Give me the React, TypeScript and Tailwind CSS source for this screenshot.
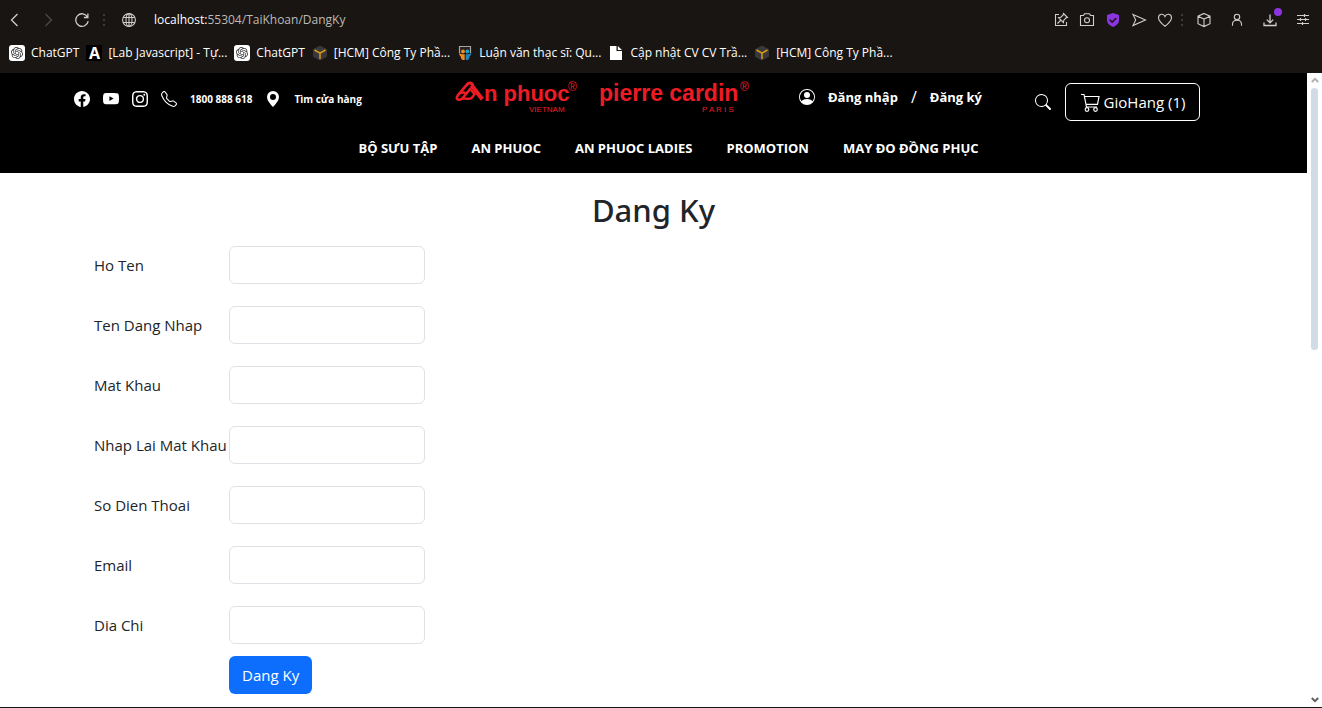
import type { ReactNode } from 'react';
import {
  BsFacebook,
  BsYoutube,
  BsInstagram,
  BsTelephone,
  BsGeoAltFill,
  BsPersonCircle,
  BsSearch,
} from 'react-icons/bs';
import { SiOpenai } from 'react-icons/si';

function Glyph({ children }: { children: ReactNode }) {
  return (
    <svg
      viewBox="0 0 16 16"
      className="block size-4"
      fill="none"
      stroke="currentColor"
      strokeWidth="1.1"
      aria-hidden="true"
    >
      {children}
    </svg>
  );
}

function ChromeButton({ label, dim, children }: { label: string; dim?: boolean; children: ReactNode }) {
  return (
    <button type="button" aria-label={label} className={dim ? 'block text-[#4d4946]' : 'block text-[#d0cdca]'}>
      <Glyph>{children}</Glyph>
    </button>
  );
}

function Dots() {
  return (
    <svg viewBox="0 0 2 12" className="h-3 w-0.5 shrink-0 fill-[#3d3936]" aria-hidden="true">
      <rect y="0" width="2" height="2" />
      <rect y="5" width="2" height="2" />
      <rect y="10" width="2" height="2" />
    </svg>
  );
}

function AddressBar() {
  return (
    <div className="flex h-10 items-center pr-[11px] pl-1.5">
      <div className="flex items-center gap-[18px]">
        <ChromeButton label="Back">
          <path d="M11.5 2 5.5 8l6 6" strokeWidth="1.3" />
        </ChromeButton>
        <ChromeButton label="Forward" dim>
          <path d="m5.500 2 6 6-6 6" strokeWidth="1.3" />
        </ChromeButton>
        <ChromeButton label="Reload">
          <path d="M13.6 5.200A6.300 6.300 0 1 0 14.200 9.200M13.900 1.500v4h-4" strokeWidth="1.3" />
        </ChromeButton>
      </div>
      <div className="ml-[13px] flex items-center gap-4">
        <Dots />
        <ChromeButton label="Site information">
          <circle cx="8" cy="8" r="6.400" />
          <ellipse cx="8" cy="8" rx="3" ry="6.400" />
          <path d="M2.300 5.500h11.400M2.300 10.500h11.400M8 1.600v12.800" />
        </ChromeButton>
      </div>
      <p className="ml-[17px] flex-1 text-[12px] text-[#bdbab7]">
        <span className="text-white">localhost:</span>55304/TaiKhoan/DangKy
      </p>
      <div className="flex items-center gap-2.5">
        <ChromeButton label="Pin page">
          <path d="M6 2.500H2.500v11h11V10" />
          <path d="m10.500 1.500 4 4-1.400.3-2.300 2.400-.4 2.300-4.900-4.900 2.300-.4 2.400-2.300zM8 8l-3.500 3.500" />
        </ChromeButton>
        <ChromeButton label="Snapshot">
          <path d="M1.500 3.500h3l1-1.800h5l1 1.800h3v10h-13z" />
          <circle cx="8" cy="8.200" r="2.500" />
        </ChromeButton>
        <ChromeButton label="Ad blocker">
          <path d="M8 1 14 3v5.500c0 3-2.500 5-6 6.500-3.500-1.500-6-3.500-6-6.500V3z" fill="#8b34e0" stroke="none" />
          <path d="m4.700 7.800 2.400 2.400 4.200-4.200" stroke="#191512" strokeWidth="1.600" />
        </ChromeButton>
        <ChromeButton label="Share">
          <path d="m2 2.400 12.500 5.600L2 13.600 4.700 8z" />
        </ChromeButton>
        <ChromeButton label="Favorites">
          <path d="M8 14.300C4.500 11.500 1.500 8.900 1.500 5.700c0-4 5-4.800 6.500-1.200 1.500-3.600 6.500-2.800 6.500 1.200 0 3.200-3 5.800-6.500 8.600z" />
        </ChromeButton>
      </div>
      <div className="ml-2 flex items-center gap-[13px]">
        <Dots />
        <div className="flex items-center gap-[17px]">
          <ChromeButton label="Extensions">
            <path d="m8 1.400 6 2.800v7.500l-6 2.900-6-2.900V4.200zM2 4.200l6 2.900 6-2.900M8 7.100v7.500" />
          </ChromeButton>
          <ChromeButton label="Profile">
            <circle cx="8" cy="4.900" r="2.700" />
            <path d="M3.500 13.800v-1.500c0-2.500 1.900-4 4.500-4s4.500 1.500 4.500 4v1.500" />
          </ChromeButton>
          <div className="relative">
            <ChromeButton label="Downloads">
              <path d="M8 2.500v8.200M4.800 7.600 8 10.800l3.200-3.200M2 10.500v3h12v-3" strokeWidth="1.300" />
            </ChromeButton>
            <span className="absolute -top-1 -right-1 size-2 rounded-full bg-[#8b34e0]" />
          </div>
          <ChromeButton label="Easy setup">
            <path d="M2 3.500h12M2 7.500h12M2 11.500h12M9.500 2v3M5.500 6v3M10.500 6v3M7.500 10v3" strokeWidth="1.200" />
          </ChromeButton>
        </div>
      </div>
    </div>
  );
}

function GptIcon() {
  return (
    <span className="flex size-4 items-center justify-center rounded-[3px] bg-white text-[#333]">
      <SiOpenai className="size-3" />
    </span>
  );
}

function LetterIcon() {
  return (
    <span className="flex size-4 items-center justify-center bg-black text-base leading-4 font-bold text-white">
      A
    </span>
  );
}

function CubeIcon() {
  return (
    <svg viewBox="0 0 16 16" className="size-4" aria-hidden="true">
      <path d="m8 .5 7 3.700v7.600l-7 3.700-7-3.700V4.200z" fill="#38383c" />
      <path d="m2.500 5 5.500 3.200L13.500 5M8 8.200v5.800" fill="none" stroke="#d99a14" strokeWidth="1.500" />
    </svg>
  );
}

function SlideIcon() {
  return (
    <svg viewBox="0 0 16 16" className="size-4" aria-hidden="true">
      <path d="M2.500 8V1.500h11V8" fill="#26221f" stroke="#a5a5a5" strokeWidth="1.200" />
      <circle cx="6" cy="6.500" r="1.900" fill="#f08a24" />
      <circle cx="10.300" cy="6.500" r="1.900" fill="#1ba3d6" />
      <path d="M2 7.500c1 1.500 3 1.800 5.700 1.800v5.500c-2.700.8-3.700-.5-4-3.200C2.500 10.500 2 9 2 7.500z" fill="#f08a24" />
      <path d="M14.300 7.500c-1 1.500-3 1.800-5.700 1.800v5.500c2.700.8 3.700-.5 4-3.200 1.200-1.100 1.700-2.600 1.700-4.100z" fill="#1b86bd" />
    </svg>
  );
}

function FileIcon() {
  return (
    <svg viewBox="0 0 16 16" className="size-4" aria-hidden="true">
      <path d="M2 1h6.500v5H14v9H2z" fill="#fff" />
      <path d="M9.800 1 14 5H9.800z" fill="#fff" />
    </svg>
  );
}

const bookmarks = [
  { icon: <GptIcon />, title: 'ChatGPT' },
  { icon: <LetterIcon />, title: '[Lab Javascript] - Tự...' },
  { icon: <GptIcon />, title: 'ChatGPT' },
  { icon: <CubeIcon />, title: '[HCM] Công Ty Phầ...' },
  { icon: <SlideIcon />, title: 'Luận văn thạc sĩ: Qu...' },
  { icon: <FileIcon />, title: 'Cập nhật CV CV Trầ...' },
  { icon: <CubeIcon />, title: '[HCM] Công Ty Phầ...' },
];

function BookmarkBar() {
  return (
    <nav aria-label="Bookmarks" className="flex h-[33px] items-start gap-[7px] pt-[5px] pl-[9px]">
      {bookmarks.map((b, i) => (
        <a key={i} href="#" className="flex items-center gap-1.5 text-[12px] leading-4 whitespace-nowrap text-white">
          {b.icon}
          {b.title}
        </a>
      ))}
    </nav>
  );
}

function AnPhuocLogo() {
  return (
    <svg viewBox="0 0 126 34" className="h-[34px] w-[126px]" fontFamily="Liberation Sans, sans-serif" fill="#ed1c24">
      <g fill="none" stroke="#ed1c24" strokeLinecap="round" strokeLinejoin="round">
        <path d="M16.500 4.200 27.300 18.200" strokeWidth="4.200" strokeLinecap="butt" />
        <path d="M12.300 3.200c1.700-2 4.300-1.300 5.300.6" strokeWidth="3" />
        <path d="M12.300 3.200 2.800 14.400c-2.200 3-.5 4.600 2 4.300 1.600-.2 2.500-1.200 3.500-2.400l7-8.600" strokeWidth="2.600" />
        <path d="M5 12.300c2.500-1.300 4-1 5.500-.5M8 17.600l5.500.2c2 .2 3.300-.6 4.300-2l1.700-2.600-3.400-4.200" strokeWidth="2.400" />
      </g>
      <text x="29" y="20" fontSize="22" fontWeight="700">n phuoc</text>
      <text x="113" y="10" fontSize="12">®</text>
      <text x="74" y="31" fontSize="8">VIETNAM</text>
    </svg>
  );
}

function PierreCardinLogo() {
  return (
    <svg viewBox="0 0 152 34" className="h-[34px] w-[152px]" fontFamily="Liberation Sans, sans-serif" fill="#ed1c24">
      <text x="0" y="20" fontSize="23" fontWeight="700">pierre cardin</text>
      <text x="141" y="10" fontSize="12">®</text>
      <text x="103" y="31" fontSize="8">P A R I S</text>
    </svg>
  );
}

function CartIcon() {
  return (
    <svg viewBox="0 0 20 20" className="size-5" fill="none" stroke="currentColor" strokeWidth="1.200" aria-hidden="true">
      <path d="M1 2.500h3L6.500 15H17M4.300 4.500H19l-1.500 7.800H6" />
      <circle cx="7" cy="17.500" r="1.800" />
      <circle cx="15.500" cy="17.500" r="1.800" />
    </svg>
  );
}

const menu = ['BỘ SƯU TẬP', 'AN PHUOC', 'AN PHUOC LADIES', 'PROMOTION', 'MAY ĐO ĐỒNG PHỤC'];

function SiteHeader() {
  return (
    <header className="h-[100px] bg-black text-white">
      <div className="grid h-[60px] grid-cols-[381fr_144fr_200fr_236fr_165fr] items-start pr-[107px] pl-[74px] whitespace-nowrap">
        <div className="flex items-center gap-[13px] pt-[18px] text-[10px] leading-4 font-bold">
          <a href="#" aria-label="Facebook"><BsFacebook className="size-4" /></a>
          <a href="#" aria-label="YouTube"><BsYoutube className="size-4" /></a>
          <a href="#" aria-label="Instagram"><BsInstagram className="size-4" /></a>
          <BsTelephone className="size-4" />
          <a href="#">1800 888 618</a>
          <BsGeoAltFill className="size-4" />
          <a href="#">Tìm cửa hàng</a>
        </div>
        <a href="#" aria-label="An Phuoc" className="pt-2"><AnPhuocLogo /></a>
        <a href="#" aria-label="Pierre Cardin" className="pt-2"><PierreCardinLogo /></a>
        <div className="flex items-center gap-[13px] pt-4 text-[13px] leading-4 font-bold">
          <BsPersonCircle className="size-4" />
          <a href="#">Đăng nhập</a>
          <span className="text-base leading-4 font-normal">/</span>
          <a href="#">Đăng ký</a>
        </div>
        <div className="flex items-center gap-3.5 pt-2.5">
          <button type="button" aria-label="Search"><BsSearch className="size-4" /></button>
          <button
            type="button"
            className="flex h-[38px] flex-1 items-center justify-center gap-1 rounded-md border border-white text-[15px]"
          >
            <CartIcon />
            GioHang (1)
          </button>
        </div>
      </div>
      <nav aria-label="Main menu" className="flex h-8 items-center justify-center gap-[34px] pl-[30px] text-[13px] font-bold whitespace-nowrap">
        {menu.map((item) => (
          <a key={item} href="#">{item}</a>
        ))}
      </nav>
    </header>
  );
}

const fields = [
  { id: 'hoTen', label: 'Ho Ten', type: 'text' },
  { id: 'tenDangNhap', label: 'Ten Dang Nhap', type: 'text' },
  { id: 'matKhau', label: 'Mat Khau', type: 'password' },
  { id: 'nhapLai', label: 'Nhap Lai Mat Khau', type: 'password' },
  { id: 'dienThoai', label: 'So Dien Thoai', type: 'tel' },
  { id: 'email', label: 'Email', type: 'email' },
  { id: 'diaChi', label: 'Dia Chi', type: 'text' },
];

function RegisterForm() {
  return (
    <main className="pb-3 text-[#212529]">
      <h1 className="pt-[18px] text-center font-['Noto_Sans','Open_Sans',sans-serif] text-[31px] leading-[38px] font-medium">
        Dang Ky
      </h1>
      <form className="pt-1.5 pl-[94px]">
        {fields.map((f) => (
          <div key={f.id} className="grid h-[60px] grid-cols-[135px_196px] items-center">
            <label htmlFor={f.id} className="text-[15px] whitespace-nowrap">{f.label}</label>
            <input
              id={f.id}
              type={f.type}
              className="h-[38px] rounded-md border border-[#dee2e6] bg-white px-3 text-base outline-none focus:border-[#86b7fe]"
            />
          </div>
        ))}
        <button type="submit" className="mt-px ml-[135px] block h-[38px] rounded-md bg-[#0d6efd] px-[13px] text-[15px] text-white">
          Dang Ky
        </button>
      </form>
    </main>
  );
}

function Scrollbar() {
  return (
    <div aria-hidden="true" className="flex w-[15px] shrink-0 flex-col items-center bg-white">
      <svg viewBox="0 0 8 6" className="mt-1 h-1.5 w-2" fill="none" stroke="#b0b0b0" strokeWidth="2">
        <path d="m.8 5 3.200-3.200L7.200 5" />
      </svg>
      <div className="mt-[5px] h-[262px] w-[7px] rounded-full bg-[#d0dbe5]" />
      <svg viewBox="0 0 8 6" className="mt-auto mb-1 h-1.5 w-2" fill="none" stroke="#606060" strokeWidth="2">
        <path d="m.8 1 3.200 3.200L7.200 1" />
      </svg>
    </div>
  );
}

export default function App() {
  return (
    <div className="flex min-h-screen flex-col bg-white font-['Open_Sans','Noto_Sans',sans-serif]">
      <div className="bg-[#191512]">
        <AddressBar />
        <BookmarkBar />
      </div>
      <div className="flex flex-1 border-b border-[#191512]">
        <div className="min-w-0 flex-1">
          <SiteHeader />
          <RegisterForm />
        </div>
        <Scrollbar />
      </div>
    </div>
  );
}
